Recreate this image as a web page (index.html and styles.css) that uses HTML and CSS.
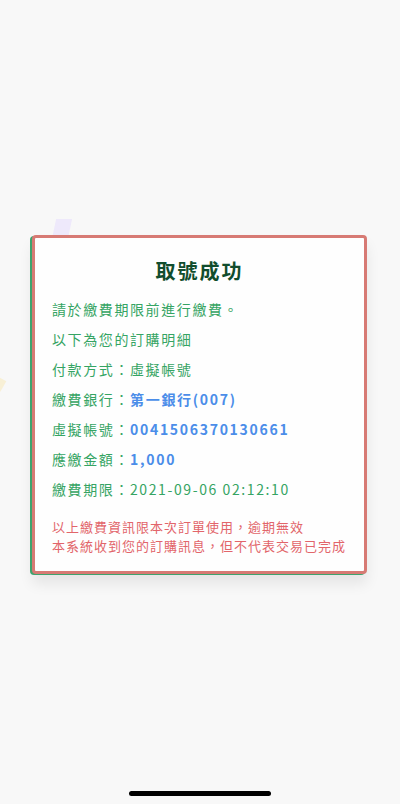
FILE: index.html
```html
<!DOCTYPE html>
<html lang="zh-Hant">
<head>
<meta charset="utf-8">
<title>取號成功</title>
<link rel="stylesheet" href="styles.css">
</head>
<body>
<div class="screen">
  <div class="deco deco-lav"></div>
  <div class="deco deco-yel"></div>
  <div class="card">
    <h1 class="title">取號成功</h1>
    <ul class="rows">
      <li class="row">請於繳費期限前進行繳費。</li>
      <li class="row">以下為您的訂購明細</li>
      <li class="row">付款方式：虛擬帳號</li>
      <li class="row">繳費銀行：<span class="val">第一銀行(007)</span></li>
      <li class="row">虛擬帳號：<span class="val">0041506370130661</span></li>
      <li class="row">應繳金額：<span class="val">1,000</span></li>
      <li class="row">繳費期限：2021-09-06 02:12:10</li>
    </ul>
    <p class="note">以上繳費資訊限本次訂單使用，逾期無效<br>本系統收到您的訂購訊息，但不代表交易已完成</p>
  </div>
  <div class="home-bar"></div>
</div>
</body>
</html>
```

FILE: styles.css
```css
html, body {
  margin: 0;
  padding: 0;
}
body {
  background: #f8f8f8;
  font-family: "Noto Sans CJK TC", "Noto Sans", sans-serif;
}
.screen {
  position: relative;
  width: 400px;
  height: 804px;
  overflow: hidden;
  display: flex;
  flex-direction: column;
  align-items: flex-start;
}
.deco {
  position: absolute;
}
.deco-lav {
  left: 54px;
  top: 219px;
  width: 16px;
  height: 20px;
  background: #eee9fb;
  transform: skewX(-12deg);
}
.deco-yel {
  left: -6px;
  top: 378px;
  width: 10px;
  height: 12px;
  background: #f8f0d6;
  transform: rotate(30deg);
}
.card {
  position: relative;
  margin: 235px 0 0 32px;
  width: 335px;
  height: 339px;
  box-sizing: border-box;
  background: #fefefe;
  border: 3px solid #d77a74;
  border-radius: 4px;
  box-shadow: -2px 1px 0 #3fa36e, 0 10px 14px rgba(0, 0, 0, 0.08);
  padding: 19px 17px 0 17px;
}
.title {
  margin: 0;
  text-align: center;
  font-size: 20px;
  line-height: 28px;
  font-weight: 700;
  letter-spacing: 2px;
  color: #114d2d;
}
.rows {
  list-style: none;
  margin: 9px 0 0 0;
  padding: 0;
}
.row {
  font-size: 14px;
  line-height: 30px;
  letter-spacing: 1.6px;
  color: #35a463;
  white-space: nowrap;
}
.val {
  color: #4b8de9;
  font-weight: 700;
  letter-spacing: 1.7px;
}
.note {
  margin: 13px 0 0 0;
  font-size: 13px;
  line-height: 19px;
  letter-spacing: 1px;
  color: #e2656a;
  white-space: nowrap;
}
.home-bar {
  margin: 217px 0 0 129px;
  width: 142px;
  height: 5px;
  border-radius: 3px;
  background: #000;
}
```
